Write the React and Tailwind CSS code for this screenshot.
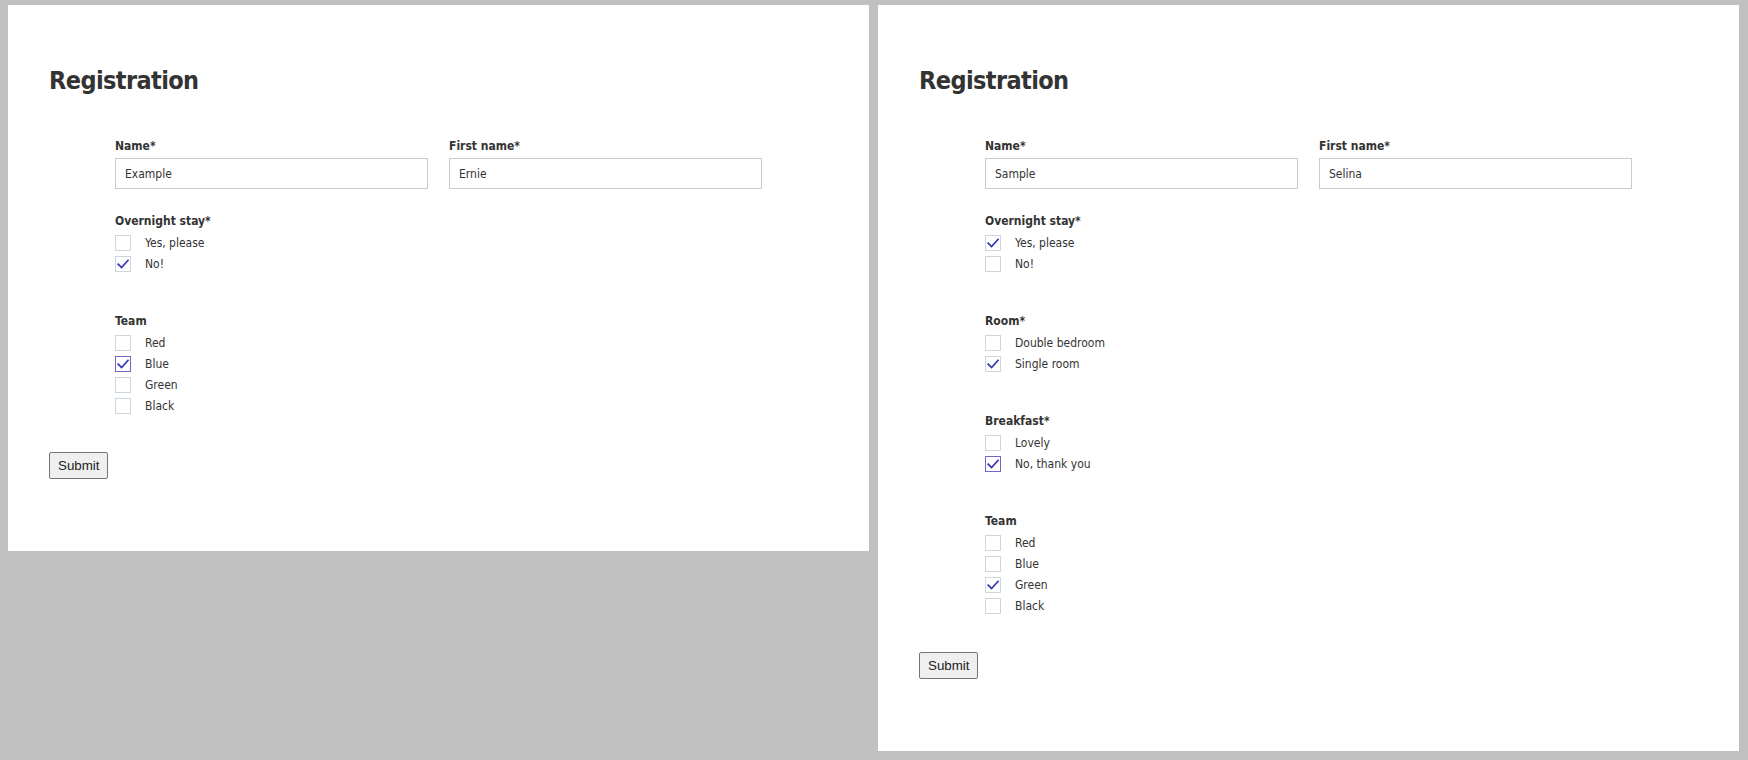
import React from "react";

function CheckMark() {
  return (
    <svg width="14" height="14" viewBox="0 0 14 14" fill="none">
      <path d="M2.2 7.2 L5.6 10.6 L12 3.4" stroke="#3535b5" strokeWidth="1.7" strokeLinecap="square" strokeLinejoin="miter" />
    </svg>
  );
}

function Check({ label, checked, focus }) {
  return (
    <div className="flex items-center h-[21px]">
      <span
        className={
          focus
            ? "w-[16px] h-[16px] border border-[#7466c9] bg-white flex items-center justify-center"
            : "w-[16px] h-[16px] border border-[#cdd5df] bg-white flex items-center justify-center"
        }
      >
        {checked ? <CheckMark /> : null}
      </span>
      <span className="ml-[14px] text-[12px] leading-[16px] text-[#333]">{label}</span>
    </div>
  );
}

function Group({ title, items, first }) {
  return (
    <div className={first ? "mt-[24px]" : "mt-[39px]"}>
      <div className="text-[12px] leading-[16px] font-bold text-[#333] mb-[3px]">{title}</div>
      {items.map((it) => (
        <Check key={it.label} label={it.label} checked={it.checked} focus={it.focus} />
      ))}
    </div>
  );
}

function Field({ label, value }) {
  return (
    <div className="w-[313px]">
      <div className="text-[12px] leading-[16px] font-bold text-[#333] mb-[4px]">{label}</div>
      <div className="h-[31px] border border-[#c9cccf] bg-white flex items-center pl-[9px] text-[12px] text-[#333]">
        {value}
      </div>
    </div>
  );
}

function Panel({ name, first, groups }) {
  return (
    <div className="w-[861px] bg-white pl-[41px] pt-[61px] pb-[72px]">
      <h1 className="text-[25px] leading-[30px] font-bold tracking-[-0.6px] text-[#333]">Registration</h1>
      <div className="pl-[66px] mt-[42px]">
        <div className="flex gap-[21px]">
          <Field label="Name*" value={name} />
          <Field label="First name*" value={first} />
        </div>
        {groups.map((g, i) => (
          <Group key={g.title} title={g.title} items={g.items} first={i === 0} />
        ))}
      </div>
      <button className="mt-[36px] h-[27px] px-[8px] border border-[#767676] rounded-[2px] bg-[#efefef] text-[13.33px] text-[#222] font-['Liberation_Sans',sans-serif]">
        Submit
      </button>
    </div>
  );
}

export default function App() {
  const left = [
    {
      title: "Overnight stay*",
      items: [
        { label: "Yes, please" },
        { label: "No!", checked: true },
      ],
    },
    {
      title: "Team",
      items: [
        { label: "Red" },
        { label: "Blue", checked: true, focus: true },
        { label: "Green" },
        { label: "Black" },
      ],
    },
  ];
  const right = [
    {
      title: "Overnight stay*",
      items: [
        { label: "Yes, please", checked: true },
        { label: "No!" },
      ],
    },
    {
      title: "Room*",
      items: [
        { label: "Double bedroom" },
        { label: "Single room", checked: true },
      ],
    },
    {
      title: "Breakfast*",
      items: [
        { label: "Lovely" },
        { label: "No, thank you", checked: true, focus: true },
      ],
    },
    {
      title: "Team",
      items: [
        { label: "Red" },
        { label: "Blue" },
        { label: "Green", checked: true },
        { label: "Black" },
      ],
    },
  ];
  return (
    <div className="w-[1748px] h-[760px] bg-[#c0c0c0] flex items-start gap-[9px] pl-[8px] pt-[5px] font-['DejaVu_Sans_Condensed','Liberation_Sans',sans-serif]">
      <Panel name="Example" first="Ernie" groups={left} />
      <Panel name="Sample" first="Selina" groups={right} />
    </div>
  );
}
